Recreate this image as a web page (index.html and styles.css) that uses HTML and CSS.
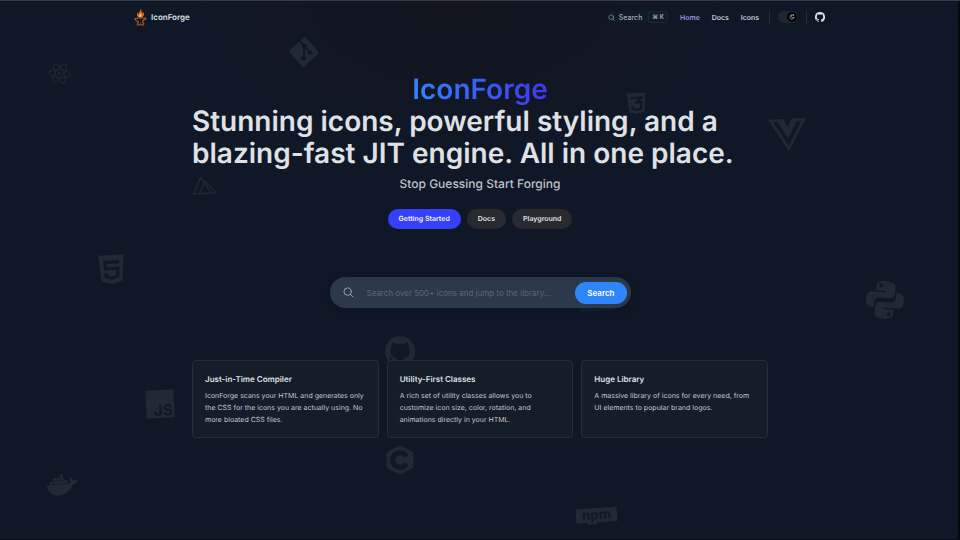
FILE: index.html
```html
<!DOCTYPE html>
<html lang="en">
<head>
<meta charset="utf-8">
<meta name="viewport" content="width=device-width, initial-scale=1">
<title>IconForge</title>
<link rel="stylesheet" href="styles.css">
</head>
<body>
<div class="backdrop" aria-hidden="true">
  <svg class="deco react" viewBox="0 0 24 24"><g fill="none" stroke="currentColor" stroke-width="1.3"><ellipse cx="12" cy="12" rx="11" ry="4.3"/><ellipse cx="12" cy="12" rx="11" ry="4.3" transform="rotate(60 12 12)"/><ellipse cx="12" cy="12" rx="11" ry="4.3" transform="rotate(120 12 12)"/></g><circle cx="12" cy="12" r="2.2" fill="currentColor"/></svg>
  <svg class="deco git" viewBox="0 0 24 24"><path fill="currentColor" d="M23.500 10.900 13.100.500a1.600 1.600 0 0 0-2.200 0L8.700 2.700l2.800 2.800a1.800 1.800 0 0 1 2.300 2.300l2.600 2.600a1.800 1.800 0 1 1-1.100 1.100l-2.500-2.500v6.400a1.800 1.800 0 1 1-1.500-.1V8.900a1.800 1.800 0 0 1-1-2.400L7.600 3.800.500 10.900a1.600 1.600 0 0 0 0 2.200l10.400 10.400a1.600 1.600 0 0 0 2.200 0l10.400-10.400a1.600 1.600 0 0 0 0-2.200z"/></svg>
  <svg class="deco css" viewBox="0 0 24 24"><path fill="currentColor" d="M1.500 0h21l-1.900 21.600L12 24l-8.600-2.400z"/><path class="cut" d="M5.500 5.500H18L12 10.800h5.500l-.6 7L12 19.200l-4.800-1.400-.2-3"/></svg>
  <svg class="deco vue" viewBox="0 0 448 448"><path fill="currentColor" d="M356.900 32H280l-56 88.600L176 32H0l224 384L448 32zM55.700 64h53.800L224 262.200 338.400 64h53.800L224 352.200z"/></svg>
  <svg class="deco nuxt" viewBox="0 0 24 24"><path fill="none" stroke="currentColor" stroke-width="1.800" stroke-linejoin="round" d="M7 19.500H1.500L8.500 4 12.500 9.500M7 19.500l5.500-12L22.500 19.500H7M12 9l6 10.500"/></svg>
  <svg class="deco html" viewBox="0 0 24 24"><path fill="currentColor" d="M1.500 0h21l-1.900 21.600L12 24l-8.600-2.400z"/><path class="cut" d="M18.500 5.800H6.700l.5 5.400h10.200l-.6 6.500-4.800 1.500-4.700-1.500-.2-2.700"/></svg>
  <svg class="deco python" viewBox="0 0 24 24"><path id="snake" fill="currentColor" d="M11.900 0C8.200 0 6 1.400 6 3.600v2.700h6.200v.9H3.500C1.100 7.200 0 9.300 0 12s1.100 5 3.300 5h2v-2.900c0-2.100 1.700-3.500 3.700-3.500h6c1.700 0 2.900-1.300 2.900-3V3.600C17.900 1.200 15.500 0 11.900 0zM8.800 1.900a1.200 1.200 0 1 1 0 2.400 1.200 1.200 0 0 1 0-2.400z"/><use href="#snake" transform="rotate(180 12 12)"/></svg>
  <svg class="deco github" viewBox="0 0 24 24"><use href="#mark"/></svg>
  <svg class="deco js" viewBox="0 0 24 24"><path fill="currentColor" d="M0 0h24v24H0z"/><text x="22.500" y="22" text-anchor="end">JS</text></svg>
  <svg class="deco cpp" viewBox="0 0 24 24"><path fill="currentColor" stroke="currentColor" stroke-width="2" stroke-linejoin="round" d="m12 1 9.700 5.500v11L12 23l-9.700-5.500v-11z"/><path class="cut wide" d="M17 9.100a5.800 5.800 0 1 0 0 5.800"/></svg>
  <svg class="deco docker" viewBox="0 0 24 24"><g fill="currentColor"><path d="M23.800 9.900c-.7-.5-2.100-.6-3.200-.4-.2-1.100-.8-2-1.700-2.700-.9 1.200-1.200 2.900-.2 4.200-.6.400-1.700.6-2.500.6H0c-.2 4.800 2.600 8.600 8.200 8.600 5.400 0 9.700-2.500 11.600-7.300 1.700.1 3.200-.6 4-3zM2.200 9h2.500v2.200H2.200zM5 9h2.500v2.200H5zM7.800 9h2.500v2.200H7.800zM10.600 9h2.500v2.200h-2.500zM13.400 9h2.500v2.200h-2.500zM5 6.400h2.500v2.200H5zM7.800 6.400h2.500v2.200H7.800zM10.600 6.400h2.500v2.200h-2.500zM10.600 3.800h2.500V6h-2.500z"/></g></svg>
  <svg class="deco npm" viewBox="0 0 40 16"><path fill="currentColor" d="M0 0h40v14H20v2h-9v-2H0z"/><text x="20" y="11" text-anchor="middle">npm</text></svg>
  <span class="deco shard"></span>
</div>

<header class="topbar">
  <div class="bar">
    <a class="brand" href="#">
      <svg viewBox="0 0 24 32" aria-hidden="true"><path fill="#dc6b20" d="M12 0c4 4 1 6 4 8 1-1 1-2 .700-3C20 9 19 14 14 16H9c-4-2-5-6-2-10 0 2 .500 3 1.500 3.500C8.500 6 12 5 12 0z"/><path fill="#ffc36b" d="M12 8c0 2 3 3 2 6-.500 1-1 1.500-2 1.500s-2.500-1-2.500-2.500c0-2 2-2.500 2.500-5z"/><path fill="none" stroke="#a8582c" stroke-width="2" stroke-linejoin="round" d="M1 18h5v-1h16v2c-3 0-5 2-6 4v3h2v4h-4l-2-2-2 2H6v-4h2v-3c-4 0-6-2-7-5z"/></svg>
      <span>IconForge</span>
    </a>
    <nav class="nav" aria-label="Main">
      <button class="find" type="button">
        <svg viewBox="0 0 24 24" aria-hidden="true"><path class="line" d="M17 17l5 5M19 11a8 8 0 1 1-16 0 8 8 0 0 1 16 0z"/></svg>
        <span>Search</span><kbd>⌘ K</kbd>
      </button>
      <div class="links">
        <a class="current" href="#">Home</a>
        <a href="#">Docs</a>
        <a href="#">Icons</a>
      </div>
      <span class="rule"></span>
      <button class="switch" type="button" role="switch" aria-checked="true" aria-label="Dark mode"><span class="knob"><svg viewBox="0 0 24 24" aria-hidden="true"><path class="line" d="M11 3a7 7 0 0 0 10 10 9 9 0 1 1-10-10zM17 2v5M14.500 4.500h5"/></svg></span></button>
      <span class="rule"></span>
      <a class="hub" href="#" aria-label="GitHub"><svg viewBox="0 0 24 24" aria-hidden="true"><path id="mark" fill="currentColor" d="M12 .300a12 12 0 0 0-3.800 23.400c.600.100.800-.300.800-.600v-2c-3.300.700-4-1.600-4-1.600-.600-1.400-1.400-1.800-1.400-1.800-1-.700.100-.700.100-.700 1.200 0 1.900 1.200 1.900 1.200 1 1.800 2.800 1.300 3.500 1 0-.800.400-1.300.700-1.600-2.700-.300-5.500-1.300-5.500-6 0-1.200.500-2.300 1.300-3.100-.200-.400-.600-1.600 0-3.200 0 0 1-.300 3.400 1.200a11.500 11.500 0 0 1 6 0c2.300-1.500 3.300-1.200 3.300-1.200.700 1.600.300 2.800.200 3.200.700.800 1.200 1.900 1.200 3.200 0 4.600-2.800 5.600-5.500 5.900.500.400.900 1 .900 2.200v3.300c0 .300.100.700.800.600A12 12 0 0 0 12 .300"/></svg></a>
    </nav>
  </div>
</header>

<main>
  <section class="hero">
    <h1><span class="name">IconForge</span> <span class="pitch">Stunning icons, powerful styling, and a blazing-fast JIT engine. All in one place.</span></h1>
    <p class="tagline">Stop Guessing Start Forging</p>
    <div class="actions">
      <a class="pill primary" href="#">Getting Started</a>
      <a class="pill" href="#">Docs</a>
      <a class="pill" href="#">Playground</a>
    </div>
  </section>

  <form class="search" role="search">
    <svg viewBox="0 0 24 24" aria-hidden="true"><path class="line" d="M16 16l6 6M18 10a8 8 0 1 1-16 0 8 8 0 0 1 16 0z"/></svg>
    <input type="search" aria-label="Search icons" placeholder="Search over 500+ icons and jump to the library...">
    <button type="submit">Search</button>
  </form>

  <section class="features">
    <article><h2>Just-in-Time Compiler</h2><p>IconForge scans your HTML and generates only the CSS for the icons you are actually using. No more bloated CSS files.</p></article>
    <article><h2>Utility-First Classes</h2><p>A rich set of utility classes allows you to customize icon size, color, rotation, and animations directly in your HTML.</p></article>
    <article><h2>Huge Library</h2><p>A massive library of icons for every need, from UI elements to popular brand logos.</p></article>
  </section>
</main>
</body>
</html>
```
FILE: styles.css
```css
* { box-sizing: border-box; }

body {
  margin: 0;
  min-height: 100vh;
  position: relative;
  overflow-x: hidden;
  background: radial-gradient(ellipse 260px 150px at 48% 0, #12151d, #101726 100%) #101726;
  border-top: 1px solid #343b47;
  border-bottom: 1px solid #090d18;
  box-shadow: inset -2px 0 #05070b;
  color: #dfe1e5;
  font-family: Inter, "Liberation Sans", sans-serif;
  text-rendering: geometricPrecision;
}

a { color: inherit; text-decoration: none; }
button, input { font: inherit; color: inherit; border: 0; }
svg { display: block; }

.line {
  fill: none;
  stroke: currentColor;
  stroke-width: 2;
  stroke-linecap: round;
  stroke-linejoin: round;
}

/* Logos scattered freely behind the content */
.backdrop { position: absolute; inset: 0; color: #212937; }
.deco { position: absolute; overflow: visible; }
.cut { fill: none; stroke: #111826; stroke-width: 2.6; }
.cut.wide { stroke-width: 4; }
.deco text { fill: #111826; font-weight: 700; font-size: 13px; }
.react { left: 48px; top: 61px; width: 23px; transform: rotate(5deg); }
.git { left: 289px; top: 36px; width: 30px; transform: rotate(4deg); }
.css { left: 626px; top: 92px; width: 21px; transform: rotate(-3deg); }
.vue { left: 769px; top: 115px; width: 38px; transform: rotate(-3deg); }
.nuxt { left: 192px; top: 172px; width: 25px; transform: rotate(-3deg); }
.html { left: 97px; top: 254px; width: 29px; transform: rotate(-3deg); }
.python { left: 866px; top: 280px; width: 38px; transform: rotate(5deg); }
.github { left: 385px; top: 335px; width: 30px; }
.js { left: 146px; top: 389px; width: 28px; transform: rotate(-3deg); }
.cpp { left: 385px; top: 444px; width: 30px; }
.docker { left: 47px; top: 468px; width: 31px; transform: rotate(-6deg); }
.npm { left: 576px; top: 507px; width: 41px; transform: rotate(-4deg); }
.react, .nuxt { color: #1d2532; }
.shard { left: 580px; top: 296px; width: 34px; height: 14px; background: #212937; transform: rotate(-3deg); }

.topbar { position: relative; padding: 0 135px 0 134px; font-size: 7px; font-weight: 500; }
.bar { display: flex; align-items: center; justify-content: space-between; height: 32px; }
.brand { display: flex; align-items: center; gap: 4px; font-size: 8px; font-weight: 600; }
.brand svg { width: 13px; height: 17px; }
.nav { display: flex; align-items: center; gap: 8px; }
.links { display: flex; gap: 12px; padding: 0 2px 0 4px; }
.find {
  display: flex;
  align-items: center;
  gap: 4px;
  padding: 0;
  border-radius: 8px;
  background: #111b28;
  color: #a6aab2;
}
.find svg { width: 7px; height: 7px; }
.find kbd {
  padding: 1px 3px;
  margin-left: 2px;
  border: 1px solid #1e2734;
  border-radius: 3px;
  font: 600 6px/8px Inter, "DejaVu Sans", sans-serif;
}
.current { color: #a5a4f5; }
.rule { width: 1px; height: 12px; background: #252c38; }
.switch {
  display: flex;
  justify-content: flex-end;
  width: 20px;
  height: 12px;
  padding: 1px;
  border-radius: 6px;
  background: #202631;
}
.knob { display: grid; place-items: center; width: 10px; height: 10px; border-radius: 50%; background: #030405; }
.knob svg { width: 6px; height: 6px; }
.hub svg { width: 10px; height: 10px; }

main { position: relative; max-width: 576px; margin: 0 auto; }
.hero { display: flex; flex-direction: column; align-items: center; padding-top: 40px; }
h1 { display: flex; flex-direction: column; align-items: center; margin: 0; font-size: 28px; line-height: 32px; font-weight: 600; }
.pitch { width: 100%; }
.name {
  background: linear-gradient(90deg, #3185ff, #4035ef);
  background-clip: text;
  -webkit-background-clip: text;
  color: transparent;
}
.tagline { margin: 7px 0 0; font-size: 12px; line-height: 16px; font-weight: 500; color: #bfc2c9; }
.actions { display: flex; gap: 6px; margin-top: 17px; }
.pill { padding: 0 11px; border-radius: 10px; background: #292a2f; font-size: 7px; line-height: 20px; font-weight: 600; }
.primary { background: #3440fb; color: #f4f4ff; }

.search {
  display: flex;
  align-items: center;
  width: 301px;
  height: 31px;
  margin: 48px auto 0;
  padding: 4px;
  padding-left: 13px;
  border-radius: 16px;
  background: #2c394a;
  box-shadow: 0 3px 8px #0c1520;
}
.search svg { width: 11px; height: 11px; color: #a2aab5; }
.search input { flex: 1; min-width: 0; padding: 0; margin-left: 13px; background: none; font-size: 8px; outline: 0; }
.search input::placeholder { color: #5d6774; opacity: 1; }
.search button { padding: 0 12px; border-radius: 11px; background: #2f86fb; color: #fff; font-size: 8px; line-height: 22px; font-weight: 600; }

.features { display: grid; grid-template-columns: repeat(3, 1fr); gap: 8px; margin-top: 52px; }
article { padding: 12px 12px 11px; border: 1px solid #252d3a; border-radius: 4px; background: #161d2a; }
h2 { margin: 0; font-size: 8px; line-height: 12px; font-weight: 600; }
article p { margin: 5px 0 0; font-size: 7px; line-height: 12px; color: #c4c7cd; }
```
